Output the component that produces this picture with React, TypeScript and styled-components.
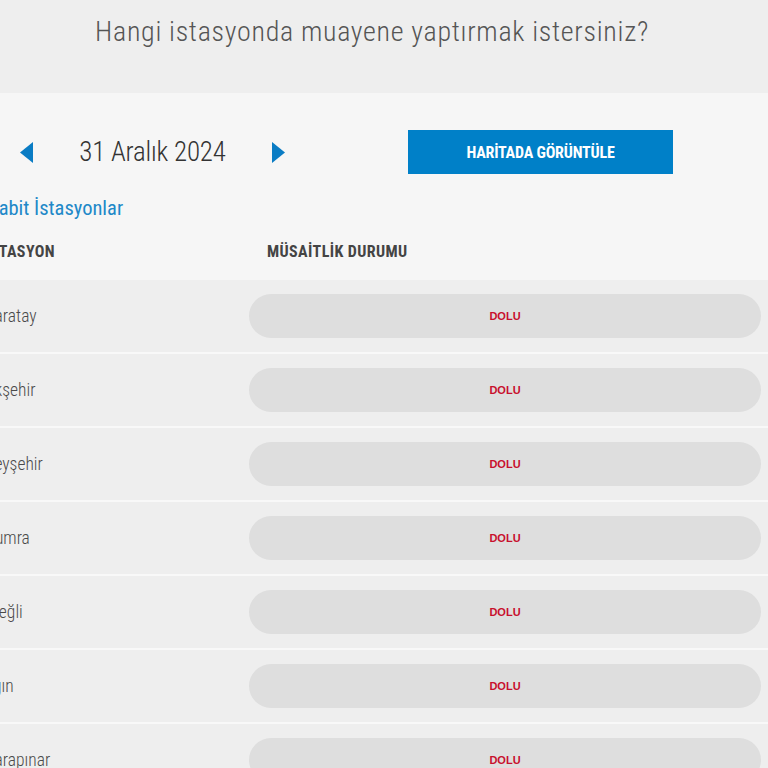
import React from "react";
import styled, { createGlobalStyle } from "styled-components";

const GlobalStyle = createGlobalStyle`
  html, body {
    margin: 0;
    padding: 0;
    background: #f6f6f6;
    overflow: hidden;
  }
  body {
    font-family: "Roboto Condensed", "Liberation Sans Narrow", "DejaVu Sans", sans-serif;
    font-stretch: condensed;
  }
`;

const Page = styled.div`
  width: 783px;
  margin-left: -15px;
`;

const Header = styled.header`
  height: 93px;
  background: #eeeeee;
  padding: 12px 9px 0 0;
  box-sizing: border-box;
  text-align: center;
`;

const Title = styled.h1`
  margin: 0;
  font-size: 28px;
  font-weight: 300;
  letter-spacing: 0.7px;
  color: #555555;
  line-height: 40px;
`;

const Body = styled.main`
  background: #f6f6f6;
  padding-top: 37px;
`;

const Nav = styled.div`
  display: flex;
  align-items: center;
  padding-left: 35px;
  height: 44px;
`;

const ArrowButton = styled.button`
  border: 0;
  background: none;
  padding: 0;
  width: 13px;
  height: 21px;
  display: flex;
  cursor: pointer;
`;

const DateLabel = styled.div`
  width: 239px;
  text-align: center;
  font-size: 27px;
  letter-spacing: -0.2px;
  color: #333333;
  font-weight: 300;
`;

const MapButton = styled.button`
  margin-left: 123px;
  width: 265px;
  height: 44px;
  border: 0;
  background: #0080c8;
  color: #ffffff;
  font-family: inherit;
  font-stretch: condensed;
  font-weight: 700;
  font-size: 16px;
  letter-spacing: -0.2px;
  cursor: pointer;
`;

const SectionTitle = styled.h2`
  margin: 21px 0 0;
  padding-left: 3px;
  font-size: 20.5px;
  font-weight: 400;
  color: #2088c8;
  line-height: 27px;
`;

const ColumnHeads = styled.div`
  display: grid;
  grid-template-columns: 282px 1fr;
  height: 58px;
  align-items: center;
  font-size: 16px;
  letter-spacing: 0.4px;
  font-weight: 700;
  color: #444444;
`;

const Rows = styled.div`
  display: flex;
  flex-direction: column;
  gap: 2px;
  background: #f8f8f8;
`;

const Row = styled.div`
  display: grid;
  grid-template-columns: 264px 512px;
  align-items: center;
  height: 72px;
  background: #eeeeee;
`;

const StationName = styled.div`
  font-size: 17.5px;
  font-weight: 300;
  color: #4a4a4a;
`;

const StatusPill = styled.div`
  height: 44px;
  border-radius: 22px;
  background: #dedede;
  display: flex;
  align-items: center;
  justify-content: center;
`;

const StatusText = styled.span<{ $full: boolean }>`
  font-family: "Liberation Sans", Arial, sans-serif;
  font-stretch: normal;
  font-size: 11px;
  font-weight: 700;
  color: ${(p) => (p.$full ? "#c8102e" : "#2a9d3a")};
`;

const Arrow = ({ dir }: { dir: "left" | "right" }) => (
  <svg width="13" height="21" viewBox="0 0 13 21">
    <polygon
      points={dir === "left" ? "13,0 0,10.5 13,21" : "0,0 13,10.5 0,21"}
      fill="#0a7cc4"
    />
  </svg>
);

const stations = ["Karatay", "Akşehir", "Beyşehir", "Çumra", "Ereğli", "Ilgın", "Karapınar"];

export default function App() {
  return (
    <>
      <GlobalStyle />
      <Page>
        <Header>
          <Title>Hangi istasyonda muayene yaptırmak istersiniz?</Title>
        </Header>
        <Body>
          <Nav>
            <ArrowButton aria-label="Önceki gün">
              <Arrow dir="left" />
            </ArrowButton>
            <DateLabel>31 Aralık 2024</DateLabel>
            <ArrowButton aria-label="Sonraki gün">
              <Arrow dir="right" />
            </ArrowButton>
            <MapButton>HARİTADA GÖRÜNTÜLE</MapButton>
          </Nav>
          <SectionTitle>Sabit İstasyonlar</SectionTitle>
          <ColumnHeads>
            <span>İSTASYON</span>
            <span>MÜSAİTLİK DURUMU</span>
          </ColumnHeads>
          <Rows>
            {stations.map((s) => (
              <Row key={s}>
                <StationName>{s}</StationName>
                <StatusPill>
                  <StatusText $full>DOLU</StatusText>
                </StatusPill>
              </Row>
            ))}
          </Rows>
        </Body>
      </Page>
    </>
  );
}
